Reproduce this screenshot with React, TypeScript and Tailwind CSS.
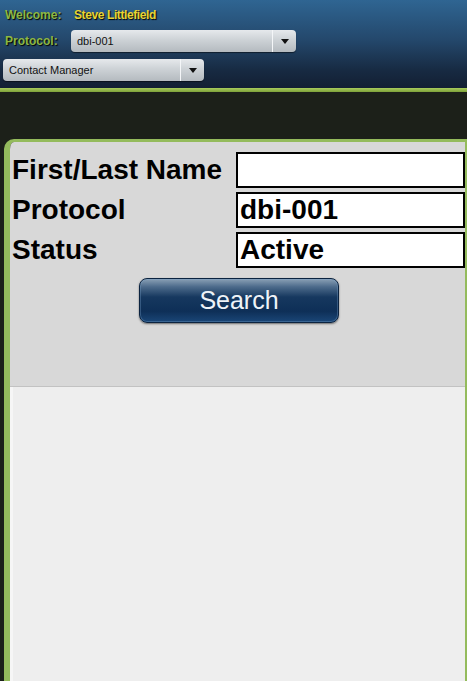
import React from "react";

function Select({ width, label, sepRight }: { width: string; label: string; sepRight: string }) {
  return (
    <div
      className={`relative h-[22px] ${width} rounded-[4px] bg-[linear-gradient(to_bottom,#e6e9ec_0%,#cdd2d6_45%,#b4babf_100%)] shadow-[0_1px_1px_rgba(0,0,0,0.5)] flex items-center`}
    >
      <span className="pl-[6px] text-[11px] text-[#111] leading-none">{label}</span>
      <div className={`absolute top-0 bottom-0 ${sepRight} w-[24px] border-l border-l-[#f4f6f8] flex items-center justify-center`}>
        <div className="w-0 h-0 border-l-[4px] border-r-[4px] border-t-[5px] border-l-transparent border-r-transparent border-t-[#111]" />
      </div>
    </div>
  );
}

export default function App() {
  return (
    <div className="min-h-[681px] h-[681px] flex flex-col bg-[#1c2019] font-['Liberation_Sans',Arial,sans-serif] overflow-hidden">
      <div className="h-[88px] shrink-0 bg-[linear-gradient(to_bottom,#2f6592_0%,#24486c_45%,#172a42_80%,#131f33_100%)] pt-[7px]">
        <div className="flex items-center h-[16px] pl-[5px] text-[12px] font-bold [text-shadow:1px_1px_1px_#000]">
          <span className="text-[#8db843] w-[69px]">Welcome:</span>
          <span className="text-[#e8d431] tracking-[-0.4px]">Steve Littlefield</span>
        </div>
        <div className="flex items-center mt-[7px] pl-[5px]">
          <span className="text-[#8db843] text-[12px] font-bold w-[66px] [text-shadow:1px_1px_1px_#000]">Protocol:</span>
          <Select width="w-[225px]" label="dbi-001" sepRight="right-0" />
        </div>
        <div className="mt-[7px] pl-[3px]">
          <Select width="w-[201px]" label="Contact Manager" sepRight="right-0" />
        </div>
      </div>
      <div className="h-[4px] shrink-0 bg-[linear-gradient(to_bottom,#a9cc5c,#7ea23a)]" />
      <div className="h-[47px] shrink-0 bg-[#1c2019]" />
      <div className="flex-1 ml-[4px] flex flex-col rounded-tl-[10px] border-t-[3px] border-l-[6px] border-r-[2px] border-[#94bb5c] overflow-hidden">
        <div className="bg-[#d8d8d8] pt-[10px] pb-[63px] border-b border-b-[#c2c2c2]">
          <div className="grid grid-cols-[226px_229px] gap-y-[4px] text-[28px] font-bold text-black">
            <div className="h-[36px] flex items-center pl-[2px]">First/Last Name</div>
            <div className="h-[36px] border-2 border-black bg-white" />
            <div className="h-[36px] flex items-center pl-[2px]">Protocol</div>
            <div className="h-[36px] border-2 border-black bg-white flex items-center pl-[2px]">dbi-001</div>
            <div className="h-[36px] flex items-center pl-[2px]">Status</div>
            <div className="h-[36px] border-2 border-black bg-white flex items-center pl-[2px]">Active</div>
          </div>
          <div className="mt-[10px] pl-[129px]">
            <div className="w-[200px] h-[45px] rounded-[8px] border border-[#0b2340] bg-[linear-gradient(to_bottom,#8aa0b5_0%,#4d6b8b_18%,#16385f_42%,#0e2f57_75%,#1a4677_100%)] shadow-[0_1px_2px_rgba(0,0,0,0.5),inset_0_0_0_1px_rgba(120,160,200,0.35)] flex items-center justify-center">
              <span className="text-[#eef3f8] text-[25px] leading-none">Search</span>
            </div>
          </div>
        </div>
        <div className="flex-1 bg-[#eeeeee] border-l-[3px] border-l-[#f6f6f6]" />
      </div>
    </div>
  );
}
